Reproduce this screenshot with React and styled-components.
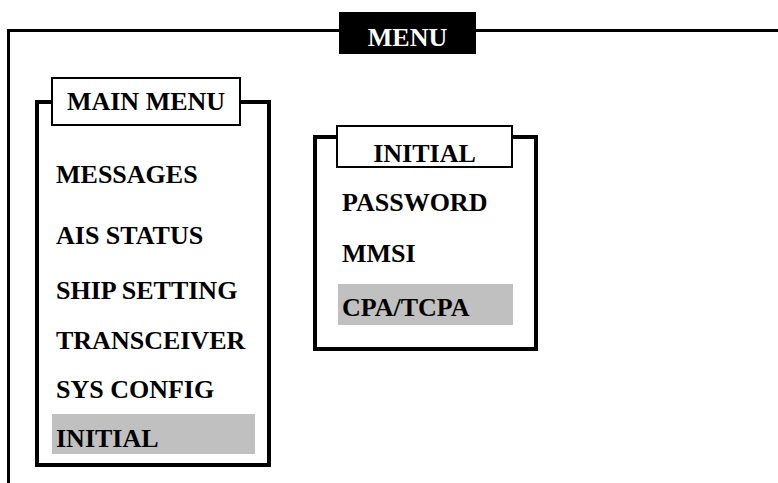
import React from "react";
import styled, { createGlobalStyle } from "styled-components";

const Global = createGlobalStyle`
  html, body {
    margin: 0;
    padding: 0;
    background: #ffffff;
  }
  body {
    width: 778px;
    height: 483px;
    overflow: hidden;
    font-family: "Liberation Serif", "Times New Roman", serif;
    color: #000000;
  }
`;

const Frame = styled.div`
  position: relative;
  box-sizing: border-box;
  margin: 29px 0 0 7px;
  height: 454px;
  border-top: 3px solid #000;
  border-left: 3px solid #000;
`;

const FrameLabel = styled.div`
  position: absolute;
  left: 329px;
  top: -20px;
  box-sizing: border-box;
  width: 137px;
  height: 42px;
  padding-top: 13px;
  background: #000;
  color: #fff;
  font-size: 26px;
  font-weight: 700;
  line-height: 26px;
  text-align: center;
`;

const PanelRow = styled.div`
  display: flex;
  align-items: flex-start;
  gap: 42px;
  padding-left: 25px;
`;

const Panel = styled.section`
  box-sizing: border-box;
  display: flex;
  flex-direction: column;
  width: ${(p) => p.$w}px;
  height: ${(p) => p.$h}px;
  margin-top: ${(p) => p.$top}px;
  border: 4px solid #000;
`;

const PanelTitle = styled.div`
  box-sizing: border-box;
  width: ${(p) => p.$w}px;
  height: ${(p) => p.$h}px;
  margin-left: ${(p) => p.$left}px;
  margin-top: ${(p) => p.$top}px;
  padding-top: ${(p) => p.$padTop}px;
  border: 2px solid #000;
  background: #fff;
  font-size: 26px;
  font-weight: 700;
  line-height: 26px;
  text-align: center;
  white-space: nowrap;
`;

const ItemList = styled.ul`
  list-style: none;
  margin: 0 0 0 ${(p) => p.$left}px;
  padding: 0;
  width: ${(p) => p.$w}px;
  display: flex;
  flex-direction: column;
`;

const Item = styled.li`
  box-sizing: border-box;
  height: ${(p) => p.$h}px;
  margin-top: ${(p) => p.$top}px;
  padding: ${(p) => p.$padTop}px 0 0 4px;
  background: ${(p) => (p.$active ? "#c0c0c0" : "transparent")};
  font-size: 26px;
  font-weight: 700;
  line-height: 26px;
  white-space: nowrap;
`;

const mainItems = [
  { label: "MESSAGES", top: 24 },
  { label: "AIS STATUS", top: 21 },
  { label: "SHIP SETTING", top: 15 },
  { label: "TRANSCEIVER", top: 10 },
  { label: "SYS CONFIG", top: 9 },
  { label: "INITIAL", top: 9, active: true },
];

const initialItems = [
  { label: "PASSWORD", top: 11 },
  { label: "MMSI", top: 10 },
  { label: "CPA/TCPA", top: 13, active: true },
];

export default function App() {
  return (
    <>
      <Global />
      <Frame>
        <FrameLabel>MENU</FrameLabel>
        <PanelRow>
          <Panel $w={236} $h={367} $top={68}>
            <PanelTitle $w={190} $h={49} $left={12} $top={-27} $padTop={10}>
              MAIN MENU
            </PanelTitle>
            <ItemList $left={13} $w={203}>
              {mainItems.map((it) => (
                <Item key={it.label} $h={40} $top={it.top} $padTop={12} $active={it.active}>
                  {it.label}
                </Item>
              ))}
            </ItemList>
          </Panel>
          <Panel $w={225} $h={216} $top={103}>
            <PanelTitle $w={177} $h={43} $left={19} $top={-14} $padTop={14}>
              INITIAL
            </PanelTitle>
            <ItemList $left={21} $w={175}>
              {initialItems.map((it) => (
                <Item key={it.label} $h={41} $top={it.top} $padTop={11} $active={it.active}>
                  {it.label}
                </Item>
              ))}
            </ItemList>
          </Panel>
        </PanelRow>
      </Frame>
    </>
  );
}
